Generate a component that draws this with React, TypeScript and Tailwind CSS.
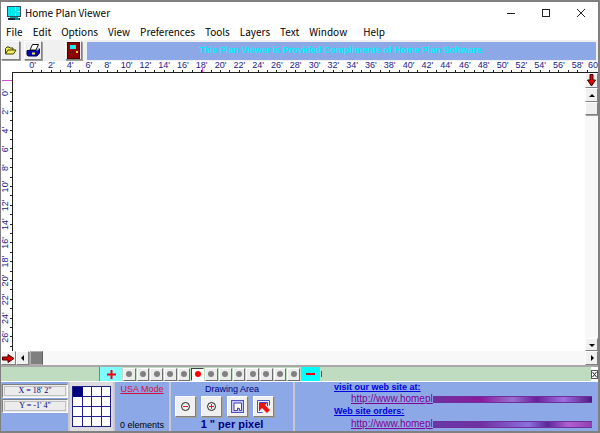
import type { ReactNode } from "react";

const MENUS = ["File", "Edit", "Options", "View", "Preferences", "Tools", "Layers", "Text", "Window"];
const FOOT = 9.4;

const raised =
  "border border-t-white border-l-white border-r-[#808080] border-b-[#808080] bg-[#f0f0f0] shadow-[1px_1px_0_#a0a0a0]";
const uiFont = "font-['Liberation_Sans',Arial,sans-serif]";

function HorizontalRuler() {
  const feet = Array.from({ length: 60 }, (_, i) => i);
  return (
    <svg className={`block h-[12px] w-full ${uiFont}`} aria-label="Horizontal ruler">
      <rect x="11" y="11" width="100%" height="1" fill="#202020" />
      {feet.map((f) => (
        <rect key={f} x={Math.round(31 + f * FOOT)} y="9" width="1" height="2" fill="#202020" />
      ))}
      {feet
        .filter((f) => f % 2 === 0)
        .map((f) => (
          <text key={f} x={31.5 + f * FOOT} y="7" textAnchor="middle" fontSize="9" fill="#202090">
            {f}'
          </text>
        ))}
      <text x="100%" y="7" textAnchor="end" fontSize="9" fill="#202090">
        60
      </text>
      <rect x="201" y="6" width="1" height="5" fill="#d050d0" />
    </svg>
  );
}

function VerticalRuler() {
  const feet = Array.from({ length: 28 }, (_, i) => i);
  return (
    <svg className={`block h-full w-[12px] shrink-0 ${uiFont}`} aria-label="Vertical ruler">
      <rect x="11" y="0" width="1" height="100%" fill="#202020" />
      <rect x="1" y="7" width="10" height="1" fill="#d050d0" />
      {feet.map((f) => (
        <rect key={f} x="9" y={Math.round(19 + f * FOOT)} width="2" height="1" fill="#202020" />
      ))}
      {feet
        .filter((f) => f % 2 === 0)
        .map((f) => {
          const y = 19.5 + f * FOOT;
          return (
            <text key={f} x="7" y={y} transform={`rotate(-90 7 ${y})`} textAnchor="middle" fontSize="9" fill="#202090">
              {f}'
            </text>
          );
        })}
    </svg>
  );
}

function ArrowButton({ label, points, className }: { label: string; points: string; className: string }) {
  return (
    <button aria-label={label} className={`flex shrink-0 items-center justify-center ${raised} ${className}`}>
      <svg width="8" height="8" viewBox="0 0 8 8">
        <polygon points={points} fill="#000" />
      </svg>
    </button>
  );
}

function IconButton({ label, className, children }: { label: string; className: string; children: ReactNode }) {
  return (
    <button aria-label={label} className={`flex shrink-0 items-center justify-center ${raised} ${className}`}>
      {children}
    </button>
  );
}

function TitleBar() {
  return (
    <header className="flex h-[21px] shrink-0 items-center bg-white pl-[6px] pr-[12px]">
      <svg width="14" height="14" viewBox="0 0 14 14" className="shrink-0">
        <rect x="0.5" y="0.5" width="13" height="10" fill="#00e8f0" stroke="#305060" />
        <path d="M8.500 1v4M8.500 7v3M10 5.500h3" stroke="#b0ffff" />
        <path d="M3 11h8v1H3z" fill="#00a8a8" />
        <path d="M1 12h12v2H1z" fill="#182838" />
        <path d="M8 13h4" stroke="#00e0e0" />
      </svg>
      <h1 className="ml-1 grow text-[10px] leading-4 text-black">Home Plan Viewer</h1>
      <div className="flex gap-[25px]">
        <button aria-label="Minimize">
          <svg width="10" height="10" viewBox="0 0 10 10" className="block">
            <path d="M1 5.5h8" stroke="#222" />
          </svg>
        </button>
        <button aria-label="Maximize">
          <svg width="10" height="10" viewBox="0 0 10 10" className="block">
            <rect x="1.5" y="1.5" width="7" height="7" fill="none" stroke="#222" />
          </svg>
        </button>
        <button aria-label="Close">
          <svg width="10" height="10" viewBox="0 0 10 10" className="block">
            <path d="M1 1l8 8M9 1l-8 8" stroke="#222" />
          </svg>
        </button>
      </div>
    </header>
  );
}

function Toolbar() {
  return (
    <div className="flex h-[21px] shrink-0 items-center bg-[#f0f0f0] pr-[2px]">
      <IconButton label="Open plan" className="h-[19px] w-[19px]">
        <svg width="13" height="11" viewBox="0 0 13 11">
          <path d="M1.5 8.500V3.500L3 2h2l1 1h3v2" fill="#f0e860" stroke="#404000" />
          <path d="M1.500 9L4 5h8L9.500 9z" fill="#f8f060" stroke="#404000" />
        </svg>
      </IconButton>
      <IconButton label="Print" className="ml-[4px] h-[19px] w-[18px]">
        <svg width="15" height="15" viewBox="0 0 15 15">
          <path d="M4 7L6.500 1.500h6L10 7z" fill="#fff" stroke="#111" />
          <path d="M1 7.500h10L13.500 5v5L11 13H2L1 11.500z" fill="#0808b0" stroke="#000050" />
          <path d="M11 7.500L13.500 5" stroke="#fff" />
          <path d="M6 10.500h3" stroke="#f0f040" strokeWidth="2" />
        </svg>
      </IconButton>
      <IconButton label="Exit" className="ml-[23px] h-[19px] w-[17px]">
        <svg width="13" height="17" viewBox="0 0 13 17">
          <rect x="0.500" y="0.500" width="12" height="16" fill="#8a0000" stroke="#500000" />
          <rect x="3" y="3" width="6" height="4" fill="#20e8f0" />
          <rect x="9" y="9" width="2" height="2" fill="#e8d040" />
        </svg>
      </IconButton>
      <p className={`ml-[5px] flex h-[18px] grow items-center justify-center bg-[#8ca8e6] text-[9px] font-bold text-[#00f0ff] ${uiFont}`}>
        This Plan Viewer is Provided Compliments of Home Plan Software.
      </p>
    </div>
  );
}

function PageStrip() {
  return (
    <div className="flex h-[16px] shrink-0 items-center border-t-2 border-[#a8a8a8] bg-[#c0dcc0]">
      <div className="h-full w-[99px] shrink-0 border-r border-[#808080]" />
      <button aria-label="Add page" className="flex h-full w-[22px] shrink-0 items-center justify-center bg-[#80ffff]">
        <svg width="9" height="9" viewBox="0 0 9 9">
          <path d="M4.500 0v9M0 4.500h9" stroke="#f00010" strokeWidth="2" />
        </svg>
      </button>
      <div className="flex h-[13px] w-[178px] shrink-0 gap-px pl-px">
        {Array.from({ length: 13 }, (_, i) => (
          <button
            key={i}
            aria-label={`Page ${i + 1}`}
            className={`flex grow items-center justify-center border ${
              i === 5
                ? "border-t-[#404040] border-l-[#404040] border-r-white border-b-white bg-white"
                : "border-t-white border-l-white border-r-[#707070] border-b-[#707070] bg-[#ececec]"
            }`}
          >
            <span className={`h-[6px] w-[6px] rounded-full ${i === 5 ? "bg-[#ff0000]" : "bg-[#808080]"}`} />
          </button>
        ))}
      </div>
      <button aria-label="Remove page" className="ml-px flex h-full w-[19px] shrink-0 items-center justify-center bg-[#00ffff]">
        <span className="h-[2px] w-[9px] bg-[#e00010]" />
      </button>
      <span className="ml-px h-[6px] w-px bg-[#2060a0]" />
      <button aria-label="Close strip" className="ml-auto flex h-full w-[7px] items-center justify-center bg-white">
        <svg width="7" height="9" viewBox="0 0 7 9">
          <rect x="0.500" y="0.500" width="6" height="8" fill="#fff" stroke="#555" />
          <path d="M1.500 2l4 5M5.500 2l-4 5" stroke="#222" />
        </svg>
      </button>
    </div>
  );
}

function WebLink({ children, tail }: { children: ReactNode; tail: string }) {
  return (
    <div className="flex items-center pl-[17px]">
      <a href="#site" className="text-[10px] leading-[12px] text-[#800090] underline">
        {children}
      </a>
      <span className={`mt-px h-[7px] grow border-y border-[#70309c] ${tail}`} />
    </div>
  );
}

function StatusPanel() {
  return (
    <footer className={`flex h-[50px] shrink-0 border-t border-white bg-[#8ca8e6] ${uiFont}`}>
      <div className="flex w-[67px] shrink-0 flex-col gap-px pl-px pt-[2px] font-['Liberation_Serif',serif]">
        {["X = 18' 2\"", "Y = -1' 4\""].map((value) => (
          <output
            key={value}
            className="block h-[14px] border border-t-[#808080] border-l-[#808080] border-r-white border-b-white bg-[#ececec] p-px"
          >
            <span className="block border border-[#c0c0c0] text-center text-[8px] leading-[8px] text-[#000080]">{value}</span>
          </output>
        ))}
      </div>
      <div className="flex w-[47px] shrink-0 items-center justify-center border-x-2 border-[#c8c8d0] bg-[#dcdce0]">
        <svg width="39" height="41" viewBox="0 0 39 41" aria-label="Page overview">
          <rect x="0.500" y="0.500" width="38" height="40" fill="#fff" stroke="#202080" />
          <path d="M10.500 0v41M19.500 0v41M29.500 0v41M0 10.500h39M0 20.500h39M0 30.500h39" stroke="#202090" />
          <rect x="1" y="1" width="10" height="10" fill="#000080" />
        </svg>
      </div>
      <div className="flex w-[54px] shrink-0 flex-col items-center justify-between pt-px">
        <button className="text-[9px] leading-[12px] text-[#d0103c] underline">USA Mode</button>
        <p className="whitespace-nowrap text-[9px] leading-[11px] text-black">0 elements</p>
      </div>
      <section className="flex w-[126px] shrink-0 flex-col items-center border-x-2 border-[#c8c8d0]">
        <h2 className="pt-px text-[9px] leading-[12px] text-[#000080]">Drawing Area</h2>
        <div className="mt-px flex gap-[5px] self-start pl-1">
          <IconButton label="Zoom out" className="h-[21px] w-[21px]">
            <svg width="11" height="11" viewBox="0 0 11 11">
              <circle cx="5.500" cy="5.500" r="4" fill="none" stroke="#222" />
              <path d="M3 5.500h5" stroke="#d02020" />
            </svg>
          </IconButton>
          <IconButton label="Zoom in" className="h-[21px] w-[21px]">
            <svg width="11" height="11" viewBox="0 0 11 11">
              <circle cx="5.500" cy="5.500" r="4" fill="none" stroke="#222" />
              <path d="M3 5.500h5M5.500 3v5" stroke="#d02020" />
            </svg>
          </IconButton>
          <IconButton label="Whole drawing" className="h-[21px] w-[21px]">
            <svg width="15" height="15" viewBox="0 0 15 15">
              <rect x="1.500" y="1.500" width="12" height="12" fill="#c8c8f8" stroke="#5050c0" />
              <path d="M4 11.500V4h7.500v7.500H9.500V9.500L7.500 9v2.500z" fill="#fff" stroke="#4040c0" />
            </svg>
          </IconButton>
          <IconButton label="Zoom to corner" className="h-[21px] w-[21px]">
            <svg width="15" height="15" viewBox="0 0 15 15">
              <path d="M1.500 13.500v-12h12v5M1.500 13.500h5" fill="none" stroke="#5050c0" />
              <path d="M3.500 12V3.500H11.500V7" fill="none" stroke="#4040c0" />
              <path d="M4 4h7L9 6L14 11l-3 3l-5-5L4 11z" fill="#f01010" />
            </svg>
          </IconButton>
        </div>
        <p className="text-[11px] font-bold leading-[14px] text-[#000080]">1 " per pixel</p>
      </section>
      <nav className="min-w-0 grow pl-[39px] pr-[6px]">
        <a href="#visit" className="block text-[9px] font-bold leading-[11px] text-[#0000e0] underline">
          visit our web site at:
        </a>
        <WebLink tail="bg-[linear-gradient(90deg,#7030a0,#8a1a9c_30%,#9a70d0_50%,#6a2098_65%,#a070e0_82%,#501880)]">
          http://www.homepl
        </WebLink>
        <a href="#orders" className="block text-[9px] font-bold leading-[13px] text-[#0000e0] underline">
          Web site orders:
        </a>
        <WebLink tail="bg-[linear-gradient(90deg,#6838a8,#7030a0_30%,#8a70e0_60%,#5a2898_72%,#b060d0_85%,#9040b0)]">
          http://www.homepl
        </WebLink>
      </nav>
    </footer>
  );
}

export default function App() {
  return (
    <div className="flex h-screen flex-col overflow-hidden border-b-2 border-l border-r-2 border-t-2 border-[#808080] bg-white font-['Noto_Sans_CJK_SC',sans-serif]">
      <TitleBar />
      <nav className="flex h-[17px] shrink-0 items-center gap-[10px] pl-[5px] text-[10px] leading-4 text-black">
        {MENUS.map((m) => (
          <button key={m}>{m}</button>
        ))}
        <button className="ml-[6px]">Help</button>
      </nav>
      <Toolbar />
      <HorizontalRuler />
      <main className="flex min-h-0 grow">
        <VerticalRuler />
        <div className="min-w-0 grow bg-white" />
        <div className="flex w-[13px] shrink-0 flex-col bg-[#f8f8f8]">
          <IconButton label="Jump down" className="h-[15px] w-[13px]">
            <svg width="9" height="13" viewBox="0 0 9 13">
              <path d="M3 0.500h3V6h2.500L4.500 12L0.500 6H3z" fill="#e00000" stroke="#400000" />
            </svg>
          </IconButton>
          <ArrowButton label="Scroll up" points="1,6 4,3 7,6" className="h-[14px] w-[13px]" />
          <div className={`h-[13px] w-[13px] ${raised}`} />
          <ArrowButton label="Scroll down" points="1,3 7,3 4,6" className="mt-auto h-[13px] w-[13px]" />
        </div>
      </main>
      <div className="flex h-[14px] shrink-0 bg-[#f8f8f8]">
        <IconButton label="Jump right" className="h-[14px] w-[15px]">
          <svg width="13" height="9" viewBox="0 0 13 9">
            <path d="M0.500 3v3H6v2.500L12 4.500L6 0.500V3z" fill="#e00000" stroke="#400000" />
          </svg>
        </IconButton>
        <ArrowButton label="Scroll left" points="5,1 2,4 5,7" className="h-[14px] w-[13px]" />
        <div className="ml-px h-[14px] w-[13px] border border-[#b0b0b0] border-r-[#606060] bg-[#808080]" />
        <ArrowButton label="Scroll right" points="3,1 6,4 3,7" className="ml-auto h-[14px] w-[13px]" />
      </div>
      <PageStrip />
      <StatusPanel />
    </div>
  );
}
